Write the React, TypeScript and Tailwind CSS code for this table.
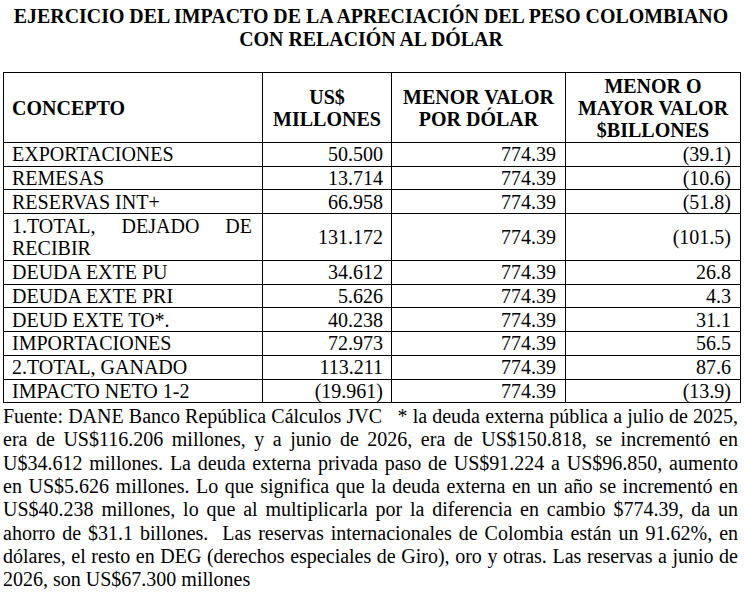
type Row = {
    concepto: string;
    millones: string;
    valor: string;
    billones: string;
    tall?: boolean;
};

const rows: Row[] = [
    { concepto: "EXPORTACIONES", millones: "50.500", valor: "774.39", billones: "(39.1)" },
    { concepto: "REMESAS", millones: "13.714", valor: "774.39", billones: "(10.6)" },
    { concepto: "RESERVAS INT+", millones: "66.958", valor: "774.39", billones: "(51.8)" },
    { concepto: "1.TOTAL, DEJADO DE RECIBIR", millones: "131.172", valor: "774.39", billones: "(101.5)", tall: true },
    { concepto: "DEUDA EXTE PU", millones: "34.612", valor: "774.39", billones: "26.8" },
    { concepto: "DEUDA EXTE PRI", millones: "5.626", valor: "774.39", billones: "4.3" },
    { concepto: "DEUD EXTE TO*.", millones: "40.238", valor: "774.39", billones: "31.1" },
    { concepto: "IMPORTACIONES", millones: "72.973", valor: "774.39", billones: "56.5" },
    { concepto: "2.TOTAL, GANADO", millones: "113.211", valor: "774.39", billones: "87.6" },
    { concepto: "IMPACTO NETO 1-2", millones: "(19.961)", valor: "774.39", billones: "(13.9)" },
];

export default function App() {
    return (
        <div className="w-[744px] h-[593px] bg-white text-black overflow-hidden pl-[3px] pr-[5px] font-['Times_New_Roman','Liberation_Serif',serif]">
            {/* titulo */}

            <h1 className="pt-[5px] text-center text-[19.9px] font-bold leading-[23px]">
                EJERCICIO DEL IMPACTO DE LA APRECIACIÓN DEL PESO COLOMBIANO
                <br />
                CON RELACIÓN AL DÓLAR
            </h1>

            {/* tabla */}

            <table className="mt-[21px] w-[737px] border-collapse table-fixed text-[20px] leading-[22px]">
                <colgroup>
                    <col className="w-[259px]" />
                    <col className="w-[129px]" />
                    <col className="w-[174px]" />
                    <col className="w-[175px]" />
                </colgroup>

                <thead>
                    <tr className="h-[70px] font-bold">
                        <th className="border border-black px-[8px] text-left align-middle">
                            CONCEPTO
                        </th>
                        <th className="border border-black px-[4px] text-center align-middle">
                            US$
                            <br />
                            MILLONES
                        </th>
                        <th className="border border-black px-[4px] text-center align-middle">
                            MENOR VALOR
                            <br />
                            POR DÓLAR
                        </th>
                        <th className="border border-black px-[4px] text-center align-middle">
                            MENOR O
                            <br />
                            MAYOR VALOR
                            <br />
                            $BILLONES
                        </th>
                    </tr>
                </thead>

                <tbody>
                    {rows.map((r) => (
                        <tr
                            key={r.concepto}
                            className={r.tall ? "h-[47px]" : "h-[23.7px]"}
                        >
                            <td
                                className={`border border-black pl-[8px] pr-[10px] align-middle ${
                                    r.tall ? "text-justify" : "text-left"
                                }`}
                            >
                                {r.concepto}
                            </td>
                            <td className="border border-black pr-[8px] text-right align-middle">
                                {r.millones}
                            </td>
                            <td className="border border-black pr-[9px] text-right align-middle">
                                {r.valor}
                            </td>
                            <td className="border border-black pr-[9px] text-right align-middle">
                                {r.billones}
                            </td>
                        </tr>
                    ))}
                </tbody>
            </table>

            {/* nota */}

            <p className="pt-[2px] text-[20px] leading-[23.3px] text-justify w-[735px]">
                Fuente: DANE Banco República Cálculos JVC{"\u00a0\u00a0"} * la deuda
                externa pública a julio de 2025, era de US$116.206 millones, y a junio
                de 2026, era de US$150.818, se incrementó en U$34.612 millones. La
                deuda externa privada paso de US$91.224 a US$96.850, aumento en
                US$5.626 millones. Lo que significa que la deuda externa en un año se
                incrementó en US$40.238 millones, lo que al multiplicarla por la
                diferencia en cambio $774.39, da un ahorro de $31.1 billones.{"\u00a0\u00a0"}Las
                reservas internacionales de Colombia están un 91.62%, en dólares, el
                resto en DEG (derechos especiales de Giro), oro y otras. Las reservas a
                junio de 2026, son US$67.300 millones
            </p>
        </div>
    );
}
